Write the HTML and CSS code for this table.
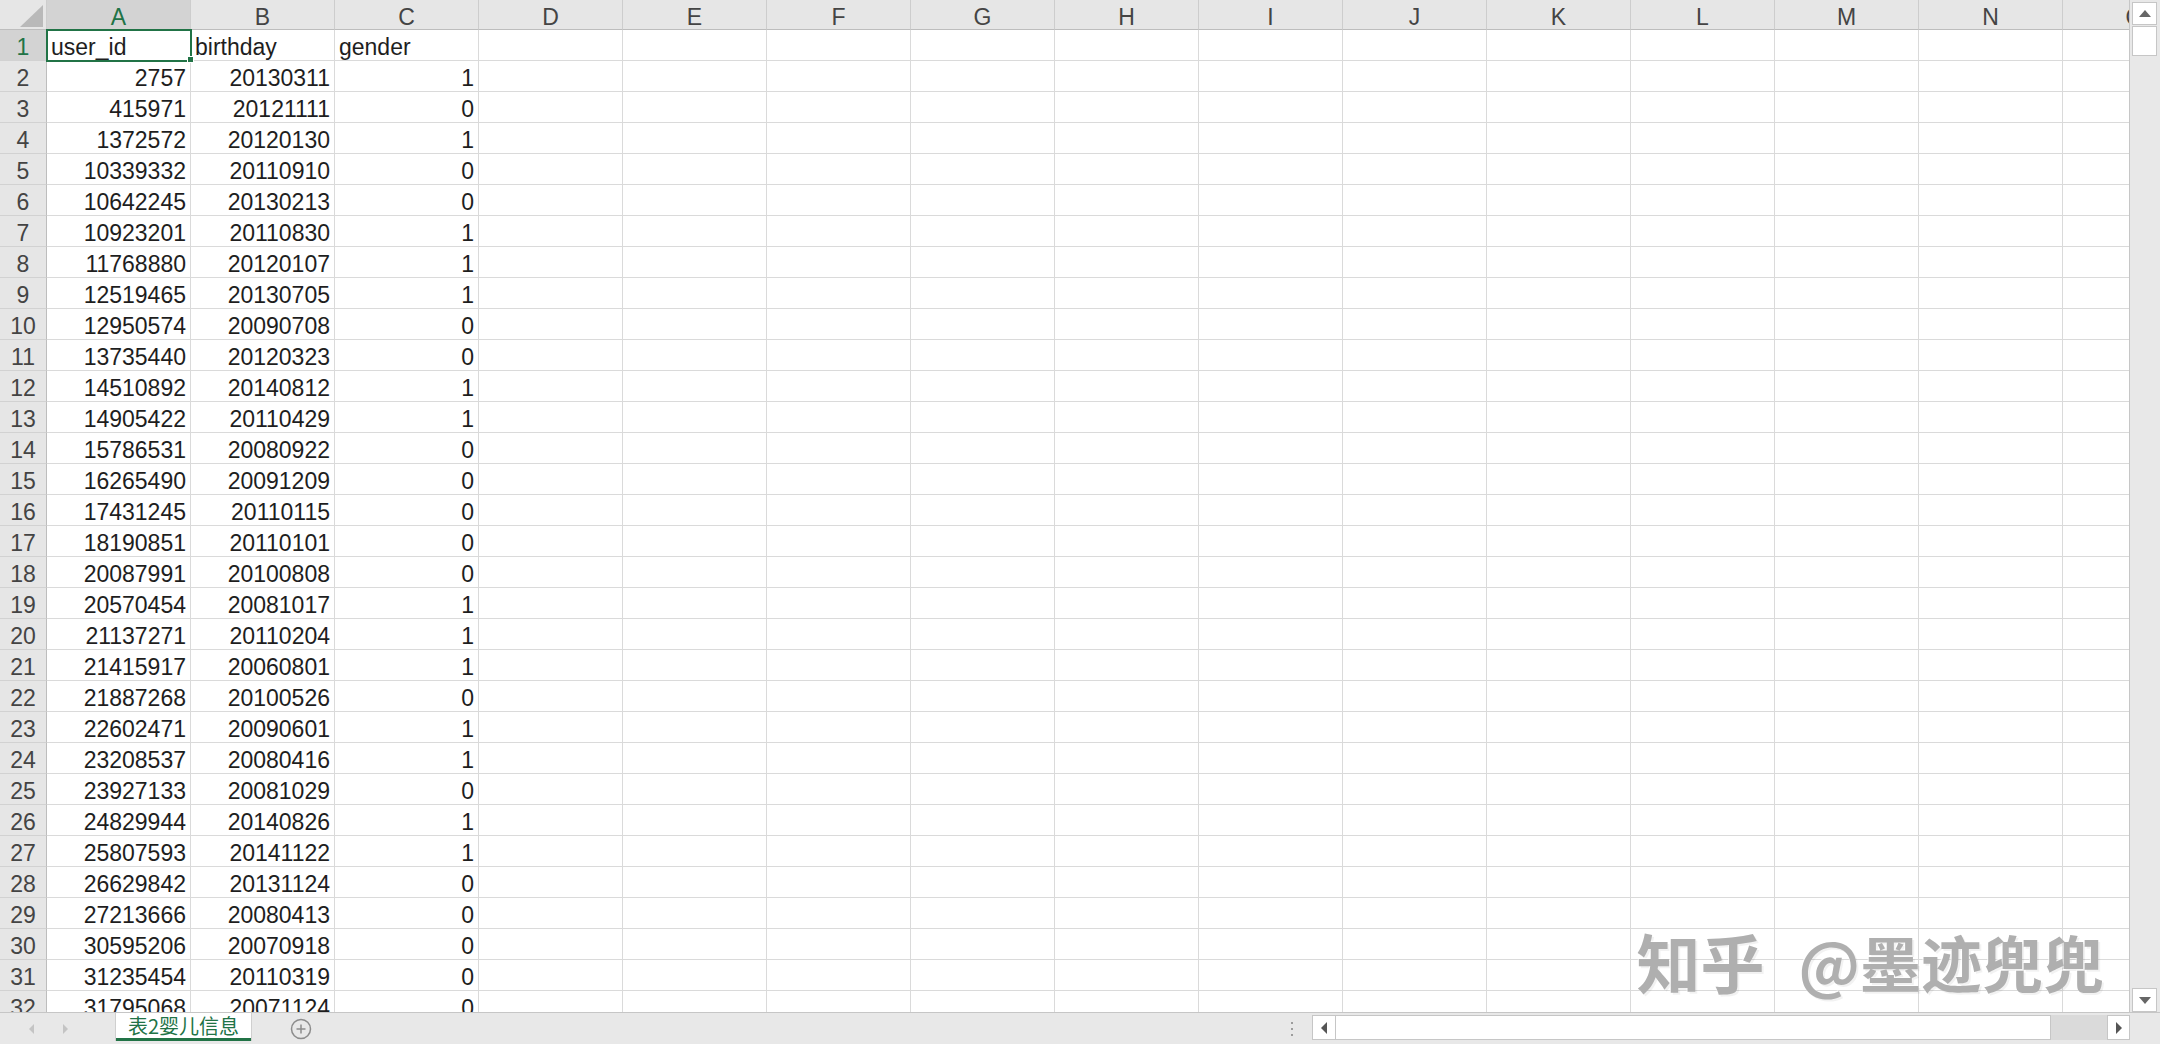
FILE: index.html
```html
<!DOCTYPE html>
<html>
<head>
  <meta charset="utf-8">
  <title>表2婴儿信息 - Excel</title>
  <link rel="stylesheet" href="styles.css">
</head>
<body>
<div class="window">
  <div class="workspace">
    <div class="sheet">
      <div class="grid">
        <div class="corner"></div>
        <div class="col on">A</div><div class="col">B</div><div class="col">C</div><div class="col">D</div><div class="col">E</div><div class="col">F</div><div class="col">G</div><div class="col">H</div><div class="col">I</div><div class="col">J</div><div class="col">K</div><div class="col">L</div><div class="col">M</div><div class="col">N</div><div class="col">O</div>

        <div class="rh on">1</div><div class="c sel">user_id</div><div class="c">birthday</div><div class="c">gender</div><div class="c"></div><div class="c"></div><div class="c"></div><div class="c"></div><div class="c"></div><div class="c"></div><div class="c"></div><div class="c"></div><div class="c"></div><div class="c"></div><div class="c"></div><div class="c"></div>
        <div class="rh">2</div><div class="c n">2757</div><div class="c n">20130311</div><div class="c n">1</div><div class="c"></div><div class="c"></div><div class="c"></div><div class="c"></div><div class="c"></div><div class="c"></div><div class="c"></div><div class="c"></div><div class="c"></div><div class="c"></div><div class="c"></div><div class="c"></div>
        <div class="rh">3</div><div class="c n">415971</div><div class="c n">20121111</div><div class="c n">0</div><div class="c"></div><div class="c"></div><div class="c"></div><div class="c"></div><div class="c"></div><div class="c"></div><div class="c"></div><div class="c"></div><div class="c"></div><div class="c"></div><div class="c"></div><div class="c"></div>
        <div class="rh">4</div><div class="c n">1372572</div><div class="c n">20120130</div><div class="c n">1</div><div class="c"></div><div class="c"></div><div class="c"></div><div class="c"></div><div class="c"></div><div class="c"></div><div class="c"></div><div class="c"></div><div class="c"></div><div class="c"></div><div class="c"></div><div class="c"></div>
        <div class="rh">5</div><div class="c n">10339332</div><div class="c n">20110910</div><div class="c n">0</div><div class="c"></div><div class="c"></div><div class="c"></div><div class="c"></div><div class="c"></div><div class="c"></div><div class="c"></div><div class="c"></div><div class="c"></div><div class="c"></div><div class="c"></div><div class="c"></div>
        <div class="rh">6</div><div class="c n">10642245</div><div class="c n">20130213</div><div class="c n">0</div><div class="c"></div><div class="c"></div><div class="c"></div><div class="c"></div><div class="c"></div><div class="c"></div><div class="c"></div><div class="c"></div><div class="c"></div><div class="c"></div><div class="c"></div><div class="c"></div>
        <div class="rh">7</div><div class="c n">10923201</div><div class="c n">20110830</div><div class="c n">1</div><div class="c"></div><div class="c"></div><div class="c"></div><div class="c"></div><div class="c"></div><div class="c"></div><div class="c"></div><div class="c"></div><div class="c"></div><div class="c"></div><div class="c"></div><div class="c"></div>
        <div class="rh">8</div><div class="c n">11768880</div><div class="c n">20120107</div><div class="c n">1</div><div class="c"></div><div class="c"></div><div class="c"></div><div class="c"></div><div class="c"></div><div class="c"></div><div class="c"></div><div class="c"></div><div class="c"></div><div class="c"></div><div class="c"></div><div class="c"></div>
        <div class="rh">9</div><div class="c n">12519465</div><div class="c n">20130705</div><div class="c n">1</div><div class="c"></div><div class="c"></div><div class="c"></div><div class="c"></div><div class="c"></div><div class="c"></div><div class="c"></div><div class="c"></div><div class="c"></div><div class="c"></div><div class="c"></div><div class="c"></div>
        <div class="rh">10</div><div class="c n">12950574</div><div class="c n">20090708</div><div class="c n">0</div><div class="c"></div><div class="c"></div><div class="c"></div><div class="c"></div><div class="c"></div><div class="c"></div><div class="c"></div><div class="c"></div><div class="c"></div><div class="c"></div><div class="c"></div><div class="c"></div>
        <div class="rh">11</div><div class="c n">13735440</div><div class="c n">20120323</div><div class="c n">0</div><div class="c"></div><div class="c"></div><div class="c"></div><div class="c"></div><div class="c"></div><div class="c"></div><div class="c"></div><div class="c"></div><div class="c"></div><div class="c"></div><div class="c"></div><div class="c"></div>
        <div class="rh">12</div><div class="c n">14510892</div><div class="c n">20140812</div><div class="c n">1</div><div class="c"></div><div class="c"></div><div class="c"></div><div class="c"></div><div class="c"></div><div class="c"></div><div class="c"></div><div class="c"></div><div class="c"></div><div class="c"></div><div class="c"></div><div class="c"></div>
        <div class="rh">13</div><div class="c n">14905422</div><div class="c n">20110429</div><div class="c n">1</div><div class="c"></div><div class="c"></div><div class="c"></div><div class="c"></div><div class="c"></div><div class="c"></div><div class="c"></div><div class="c"></div><div class="c"></div><div class="c"></div><div class="c"></div><div class="c"></div>
        <div class="rh">14</div><div class="c n">15786531</div><div class="c n">20080922</div><div class="c n">0</div><div class="c"></div><div class="c"></div><div class="c"></div><div class="c"></div><div class="c"></div><div class="c"></div><div class="c"></div><div class="c"></div><div class="c"></div><div class="c"></div><div class="c"></div><div class="c"></div>
        <div class="rh">15</div><div class="c n">16265490</div><div class="c n">20091209</div><div class="c n">0</div><div class="c"></div><div class="c"></div><div class="c"></div><div class="c"></div><div class="c"></div><div class="c"></div><div class="c"></div><div class="c"></div><div class="c"></div><div class="c"></div><div class="c"></div><div class="c"></div>
        <div class="rh">16</div><div class="c n">17431245</div><div class="c n">20110115</div><div class="c n">0</div><div class="c"></div><div class="c"></div><div class="c"></div><div class="c"></div><div class="c"></div><div class="c"></div><div class="c"></div><div class="c"></div><div class="c"></div><div class="c"></div><div class="c"></div><div class="c"></div>
        <div class="rh">17</div><div class="c n">18190851</div><div class="c n">20110101</div><div class="c n">0</div><div class="c"></div><div class="c"></div><div class="c"></div><div class="c"></div><div class="c"></div><div class="c"></div><div class="c"></div><div class="c"></div><div class="c"></div><div class="c"></div><div class="c"></div><div class="c"></div>
        <div class="rh">18</div><div class="c n">20087991</div><div class="c n">20100808</div><div class="c n">0</div><div class="c"></div><div class="c"></div><div class="c"></div><div class="c"></div><div class="c"></div><div class="c"></div><div class="c"></div><div class="c"></div><div class="c"></div><div class="c"></div><div class="c"></div><div class="c"></div>
        <div class="rh">19</div><div class="c n">20570454</div><div class="c n">20081017</div><div class="c n">1</div><div class="c"></div><div class="c"></div><div class="c"></div><div class="c"></div><div class="c"></div><div class="c"></div><div class="c"></div><div class="c"></div><div class="c"></div><div class="c"></div><div class="c"></div><div class="c"></div>
        <div class="rh">20</div><div class="c n">21137271</div><div class="c n">20110204</div><div class="c n">1</div><div class="c"></div><div class="c"></div><div class="c"></div><div class="c"></div><div class="c"></div><div class="c"></div><div class="c"></div><div class="c"></div><div class="c"></div><div class="c"></div><div class="c"></div><div class="c"></div>
        <div class="rh">21</div><div class="c n">21415917</div><div class="c n">20060801</div><div class="c n">1</div><div class="c"></div><div class="c"></div><div class="c"></div><div class="c"></div><div class="c"></div><div class="c"></div><div class="c"></div><div class="c"></div><div class="c"></div><div class="c"></div><div class="c"></div><div class="c"></div>
        <div class="rh">22</div><div class="c n">21887268</div><div class="c n">20100526</div><div class="c n">0</div><div class="c"></div><div class="c"></div><div class="c"></div><div class="c"></div><div class="c"></div><div class="c"></div><div class="c"></div><div class="c"></div><div class="c"></div><div class="c"></div><div class="c"></div><div class="c"></div>
        <div class="rh">23</div><div class="c n">22602471</div><div class="c n">20090601</div><div class="c n">1</div><div class="c"></div><div class="c"></div><div class="c"></div><div class="c"></div><div class="c"></div><div class="c"></div><div class="c"></div><div class="c"></div><div class="c"></div><div class="c"></div><div class="c"></div><div class="c"></div>
        <div class="rh">24</div><div class="c n">23208537</div><div class="c n">20080416</div><div class="c n">1</div><div class="c"></div><div class="c"></div><div class="c"></div><div class="c"></div><div class="c"></div><div class="c"></div><div class="c"></div><div class="c"></div><div class="c"></div><div class="c"></div><div class="c"></div><div class="c"></div>
        <div class="rh">25</div><div class="c n">23927133</div><div class="c n">20081029</div><div class="c n">0</div><div class="c"></div><div class="c"></div><div class="c"></div><div class="c"></div><div class="c"></div><div class="c"></div><div class="c"></div><div class="c"></div><div class="c"></div><div class="c"></div><div class="c"></div><div class="c"></div>
        <div class="rh">26</div><div class="c n">24829944</div><div class="c n">20140826</div><div class="c n">1</div><div class="c"></div><div class="c"></div><div class="c"></div><div class="c"></div><div class="c"></div><div class="c"></div><div class="c"></div><div class="c"></div><div class="c"></div><div class="c"></div><div class="c"></div><div class="c"></div>
        <div class="rh">27</div><div class="c n">25807593</div><div class="c n">20141122</div><div class="c n">1</div><div class="c"></div><div class="c"></div><div class="c"></div><div class="c"></div><div class="c"></div><div class="c"></div><div class="c"></div><div class="c"></div><div class="c"></div><div class="c"></div><div class="c"></div><div class="c"></div>
        <div class="rh">28</div><div class="c n">26629842</div><div class="c n">20131124</div><div class="c n">0</div><div class="c"></div><div class="c"></div><div class="c"></div><div class="c"></div><div class="c"></div><div class="c"></div><div class="c"></div><div class="c"></div><div class="c"></div><div class="c"></div><div class="c"></div><div class="c"></div>
        <div class="rh">29</div><div class="c n">27213666</div><div class="c n">20080413</div><div class="c n">0</div><div class="c"></div><div class="c"></div><div class="c"></div><div class="c"></div><div class="c"></div><div class="c"></div><div class="c"></div><div class="c"></div><div class="c"></div><div class="c"></div><div class="c"></div><div class="c"></div>
        <div class="rh">30</div><div class="c n">30595206</div><div class="c n">20070918</div><div class="c n">0</div><div class="c"></div><div class="c"></div><div class="c"></div><div class="c"></div><div class="c"></div><div class="c"></div><div class="c"></div><div class="c"></div><div class="c"></div><div class="c"></div><div class="c"></div><div class="c"></div>
        <div class="rh">31</div><div class="c n">31235454</div><div class="c n">20110319</div><div class="c n">0</div><div class="c"></div><div class="c"></div><div class="c"></div><div class="c"></div><div class="c"></div><div class="c"></div><div class="c"></div><div class="c"></div><div class="c"></div><div class="c"></div><div class="c"></div><div class="c"></div>
        <div class="rh">32</div><div class="c n">31795068</div><div class="c n">20071124</div><div class="c n">0</div><div class="c"></div><div class="c"></div><div class="c"></div><div class="c"></div><div class="c"></div><div class="c"></div><div class="c"></div><div class="c"></div><div class="c"></div><div class="c"></div><div class="c"></div><div class="c"></div>
      </div>

      <!-- watermark from the screenshot source -->
      <div class="watermark">
        <span class="wm-site">知乎</span>
        <span class="wm-user">@墨迹兜兜</span>
      </div>
    </div>

    <div class="vscroll">
      <div class="sbtn up">
        <svg width="12" height="7" viewBox="0 0 12 7"><polygon points="0,7 6,0 12,7" fill="#666"/></svg>
      </div>
      <div class="vthumb"></div>
      <div class="vtrack"></div>
      <div class="sbtn down">
        <svg width="12" height="7" viewBox="0 0 12 7"><polygon points="0,0 12,0 6,7" fill="#666"/></svg>
      </div>
    </div>
  </div>

  <div class="tabbar">
    <div class="nav">
      <svg width="5" height="10" viewBox="0 0 5 10"><polygon points="5,0 5,10 0,5" fill="#c4c4c4"/></svg>
      <svg width="5" height="10" viewBox="0 0 5 10"><polygon points="0,0 0,10 5,5" fill="#c4c4c4"/></svg>
    </div>
    <div class="tab">表2婴儿信息</div>
    <div class="add">
      <svg width="22" height="22" viewBox="0 0 22 22">
        <circle cx="11" cy="11" r="9.5" fill="none" stroke="#8c8c8c" stroke-width="1.5"/>
        <path d="M11 6.5v9M6.5 11h9" stroke="#8c8c8c" stroke-width="1.5"/>
      </svg>
    </div>
    <div class="dots"><span></span><span></span><span></span></div>
    <div class="hscroll">
      <div class="hbtn left">
        <svg width="6" height="12" viewBox="0 0 6 12"><polygon points="6,0 6,12 0,6" fill="#555"/></svg>
      </div>
      <div class="hthumb"></div>
      <div class="htrack"></div>
      <div class="hbtn right">
        <svg width="6" height="12" viewBox="0 0 6 12"><polygon points="0,0 0,12 6,6" fill="#555"/></svg>
      </div>
    </div>
    <div class="tabbar-corner"></div>
  </div>
</div>
</body>
</html>
```

FILE: styles.css
```css
body {
    margin: 0;
    overflow: hidden;
    background: #fff;
    font-family: 'Liberation Sans', 'Noto Sans CJK SC', sans-serif;
}

.window {
    width: 2160px;
    height: 1044px;
    display: flex;
    flex-direction: column;
}

.workspace {
    display: flex;
    height: 1012px;
}

.sheet {
    flex: 1;
    position: relative;
    overflow: hidden;
}

/* cell grid */
.grid {
    display: grid;
    grid-template-columns: 47px repeat(15, 144px);
    grid-template-rows: 30px;
    grid-auto-rows: 31px;
    font-size: 23px;
    color: #1e1e1e;
}

.grid > div {
    box-sizing: border-box;
    line-height: 26px;
    padding-top: 4px;
    white-space: nowrap;
    overflow: hidden;
}

.corner {
    position: relative;
    background: #e6e6e6;
    border-right: 1px solid #cdcdcd;
    border-bottom: 1px solid #bdbdbd;
}

.corner::after {
    content: '';
    position: absolute;
    right: 3px;
    bottom: 2px;
    width: 23px;
    height: 22px;
    background: #b9b9b9;
    clip-path: polygon(100% 0, 100% 100%, 0 100%);
}

.col {
    background: #e6e6e6;
    border-right: 1px solid #cdcdcd;
    border-bottom: 1px solid #bdbdbd;
    text-align: center;
    color: #444;
}

.rh {
    background: #e6e6e6;
    border-right: 1px solid #bdbdbd;
    border-bottom: 1px solid #d2d2d2;
    text-align: center;
    color: #444;
}

.col.on,
.rh.on {
    background: #d3d3d3;
    color: #217346;
}

.c {
    border-right: 1px solid #dadada;
    border-bottom: 1px solid #dadada;
    padding: 0 4px;
}

.c.n {
    text-align: right;
}

/* active cell */
.grid > .c.sel {
    position: relative;
    overflow: visible;
    z-index: 2;
}

.c.sel::before {
    content: '';
    position: absolute;
    left: -1px;
    top: -1px;
    right: -2px;
    bottom: -2px;
    border: 2px solid #217346;
}

.c.sel::after {
    content: '';
    position: absolute;
    right: -4px;
    bottom: -3px;
    width: 5px;
    height: 5px;
    background: #217346;
    border: 1px solid #fff;
}

.watermark {
    position: absolute;
    right: 25px;
    bottom: 20px;
    display: flex;
    align-items: flex-end;
    gap: 34px;
    font-family: 'Noto Sans CJK SC', sans-serif;
    font-weight: 700;
    line-height: 1;
    color: #afafaf;
    text-shadow: -1px -1px 0 rgba(255, 255, 255, 0.7), 2px 2px 0 rgba(0, 0, 0, 0.05);
}

.wm-site {
    font-size: 64px;
}

.wm-user {
    font-size: 61px;
}

/* vertical scrollbar */
.vscroll {
    width: 31px;
    box-sizing: border-box;
    border-left: 1px solid #c6c6c6;
    background: #e8e8e8;
    padding: 2px 3px 0 2px;
    display: flex;
    flex-direction: column;
}

.sbtn,
.vthumb {
    box-sizing: border-box;
    background: #fff;
    border: 1px solid #c6c6c6;
}

.sbtn {
    display: flex;
    align-items: center;
    justify-content: center;
}

.sbtn.up {
    height: 23px;
}

.vthumb {
    height: 30px;
    margin-top: 1px;
}

.vtrack {
    flex: 1;
}

.sbtn.down {
    height: 24px;
}

/* sheet tabs + horizontal scrollbar */
.tabbar {
    height: 32px;
    box-sizing: border-box;
    border-top: 1px solid #c6c6c6;
    background: #e8e8e8;
    display: flex;
}

.nav {
    width: 116px;
    box-sizing: border-box;
    padding-left: 29px;
    display: flex;
    align-items: center;
    gap: 29px;
}

.tab {
    width: 135px;
    margin-bottom: 3px;
    background: #fff;
    border-bottom: 3px solid #217346;
    box-shadow: 1px 0 0 #cfcfcf, -1px 0 0 #cfcfcf;
    color: #217346;
    font-family: 'Noto Sans CJK SC', sans-serif;
    font-size: 20px;
    display: flex;
    align-items: center;
    justify-content: center;
}

.add {
    margin-left: 39px;
    display: flex;
    align-items: center;
}

.dots {
    margin-left: auto;
    margin-right: 18px;
    width: 3px;
    display: flex;
    flex-direction: column;
    justify-content: center;
    gap: 4px;
}

.dots span {
    width: 2px;
    height: 2px;
    background: #9c9c9c;
}

.hscroll {
    width: 818px;
    height: 25px;
    margin-top: 2px;
    display: flex;
}

.hbtn {
    box-sizing: border-box;
    background: #fff;
    border: 1px solid #c6c6c6;
    display: flex;
    align-items: center;
    justify-content: center;
}

.hbtn.left {
    width: 24px;
}

.hbtn.right {
    width: 23px;
}

.hthumb {
    width: 715px;
    box-sizing: border-box;
    background: #fff;
    border: 1px solid #c6c6c6;
    border-left: none;
}

.htrack {
    flex: 1;
    background: #dadada;
}

.tabbar-corner {
    width: 30px;
}
```
